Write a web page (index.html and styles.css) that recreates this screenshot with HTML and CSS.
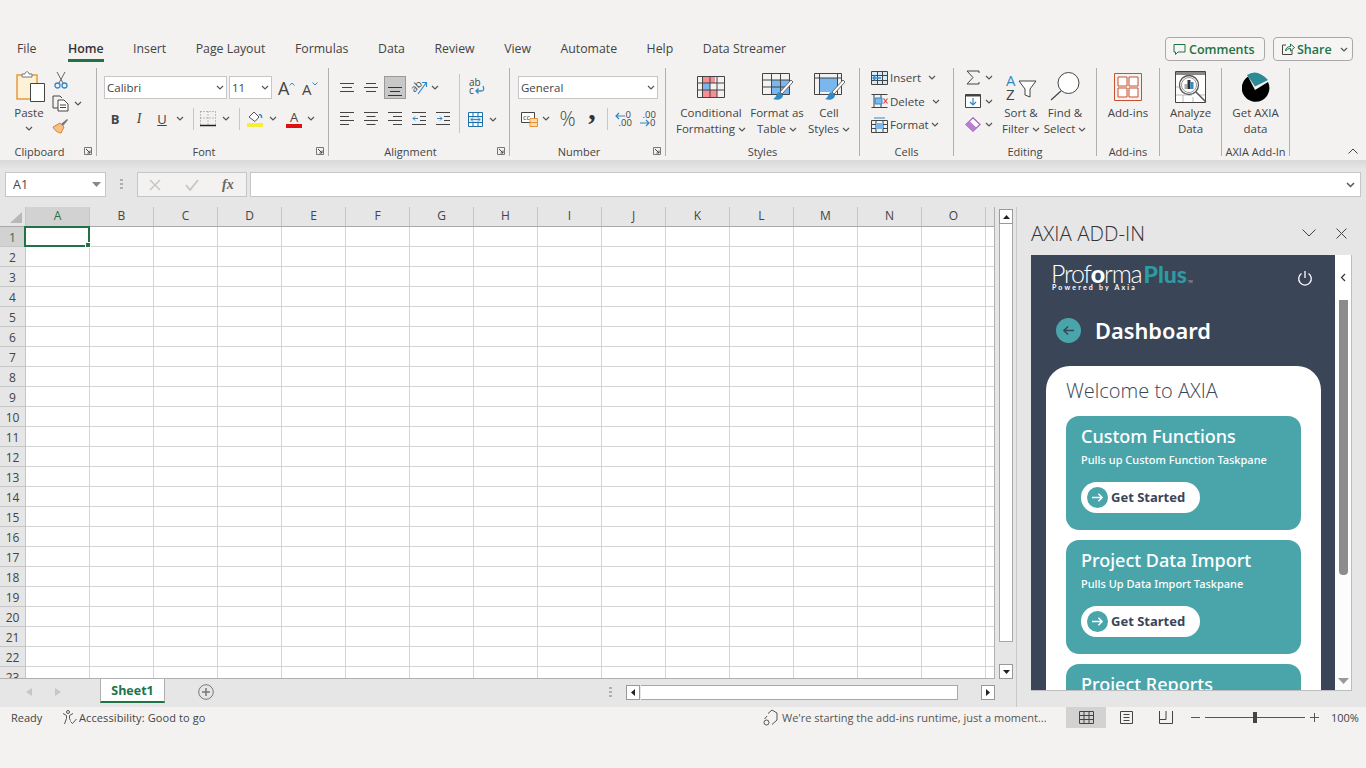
FILE: index.html
```html
<!DOCTYPE html>
<html>

<head>
	<title>Book1 - Excel</title>
	<meta charset="UTF-8">
	<link rel="stylesheet" href="styles.css">
</head>

<body>
	<svg class="sprite" width="0" height="0">
		<symbol id="chev" viewBox="0 0 8 5">
			<path d="M1 1l3 3 3-3" fill="none" stroke="#555" stroke-width="1.2" />
		</symbol>
		<symbol id="launch" viewBox="0 0 8 8">
			<path d="M.5.5h7v7h-7z" fill="none" stroke="#777" />
			<path d="M2 2l4 4M3.5 6H6V3.5" fill="none" stroke="#444" />
		</symbol>
		<symbol id="go" viewBox="0 0 14 12">
			<path d="M1 6h11M8 2l4 4-4 4" fill="none" stroke="#fff" stroke-width="1.6" />
		</symbol>
	</svg>

	<div class="topgap"></div>

	<div class="tabs">
		<nav class="tablist">
			<span class="tab first">File</span>
			<span class="tab active">Home</span>
			<span class="tab">Insert</span>
			<span class="tab">Page Layout</span>
			<span class="tab">Formulas</span>
			<span class="tab">Data</span>
			<span class="tab">Review</span>
			<span class="tab">View</span>
			<span class="tab">Automate</span>
			<span class="tab">Help</span>
			<span class="tab">Data Streamer</span>
		</nav>
		<div class="share-btns">
			<div class="pill comments">
				<svg width="13" height="13" viewBox="0 0 13 13">
					<path d="M1 1.500h11v7.500H5L2.500 11.500V9H1z" fill="none" stroke="#217346" />
				</svg>
				Comments
			</div>
			<div class="pill share">
				<svg width="14" height="14" viewBox="0 0 14 14">
					<path d="M5 3H1.500v9.500h9.500V8" fill="none" stroke="#444" />
					<path d="M4.500 9c0-3 2.500-4.500 5-4.500V2l4 3.500-4 3.500V6.500c-2 0-4 1-5 2.500z" fill="none" stroke="#217346" />
				</svg>
				Share
				<svg class="share-chev" width="8" height="5"><use href="#chev" /></svg>
			</div>
		</div>
	</div>

	<div class="ribbon">
		<!-- clipboard -->
		<section class="group g-clip">
			<div class="body">
				<div class="big paste">
					<div class="big-icon">
						<svg class="paste-icon" width="30" height="31" viewBox="0 0 30 31">
							<path d="M2 4h20v24H2z" fill="#fdf1d8" stroke="#e59a3c" stroke-width="1.500" />
							<path d="M7 6V3h3c0-3 4-3 4 0h3v3z" fill="#fff" stroke="#777" />
							<path d="M15.500 12.500h14v18h-14z" fill="#fff" stroke="#444" />
						</svg>
					</div>
					<span>Paste</span>
					<svg class="chev-line" width="8" height="5"><use href="#chev" /></svg>
				</div>
				<div class="clip-tools">
					<svg class="cut" width="14" height="18" viewBox="0 0 14 18">
						<path d="M3 1l6 11M11 1L5 12" fill="none" stroke="#666" />
						<circle cx="3.500" cy="14.500" r="2.500" fill="none" stroke="#2f8ac9" stroke-width="1.300" />
						<circle cx="10.500" cy="14.500" r="2.500" fill="none" stroke="#2f8ac9" stroke-width="1.300" />
					</svg>
					<div class="tool-row">
						<svg width="17" height="17" viewBox="0 0 17 17">
							<path d="M6 13H1V1h7l2 2" fill="none" stroke="#444" />
							<path d="M6 5h6l4 4v7H6z" fill="#fff" stroke="#444" />
							<path d="M8 10h6M8 12.500h6" stroke="#444" />
						</svg>
						<svg class="copy-chev" width="8" height="5"><use href="#chev" /></svg>
					</div>
					<svg class="brush" width="17" height="17" viewBox="0 0 17 17">
						<path d="M9 6l2 2 5-6-1-1z" fill="#777" />
						<path d="M8 5l4 4-3 6c-3 0-7-3-8-6z" fill="#f3c08a" stroke="#e0822c" />
					</svg>
				</div>
			</div>
			<div class="label-row"><span class="label">Clipboard</span><svg class="launch" width="8" height="8"><use href="#launch" /></svg></div>
		</section>

		<!-- font -->
		<section class="group g-font">
			<div class="body stack">
				<div class="font-row1">
					<div class="combo font-name">Calibri<svg width="8" height="5"><use href="#chev" /></svg></div>
					<div class="combo font-size">11<svg width="8" height="5"><use href="#chev" /></svg></div>
					<div class="grow"><span class="a-big">A</span><svg width="6" height="4" viewBox="0 0 6 4"><path d="M.5 3.500L3 1l2.500 2.500" fill="none" stroke="#2f8ac9" /></svg></div>
					<div class="grow shrink"><span class="a-small">A</span><svg width="6" height="4" viewBox="0 0 6 4"><path d="M.5.500L3 3 5.500.500" fill="none" stroke="#2f8ac9" /></svg></div>
				</div>
				<div class="font-row2">
					<b class="glyph">B</b>
					<i class="glyph serif">I</i>
					<u class="glyph">U</u>
					<svg width="8" height="5"><use href="#chev" /></svg>
					<span class="sep"></span>
					<svg width="16" height="16" viewBox="0 0 16 16">
						<path d="M.5.500h15M.5.500v13M15.500.500v13M8 .500v13M.5 7h15" fill="none" stroke="#888" stroke-dasharray="1 2" />
						<path d="M0 14.500h16" stroke="#222" stroke-width="1.500" />
					</svg>
					<svg width="8" height="5"><use href="#chev" /></svg>
					<span class="sep"></span>
					<svg width="16" height="17" viewBox="0 0 16 17">
						<path d="M2 7l5-5 5 5-4 4.500z" fill="#fff" stroke="#555" />
						<path d="M12 5c2-1 3 1 2.500 3" fill="none" stroke="#2f8ac9" stroke-width="1.500" />
						<path d="M0 13h16v4H0z" fill="#f7ee3a" />
					</svg>
					<svg width="8" height="5"><use href="#chev" /></svg>
					<div class="color-a"><span>A</span></div>
					<svg width="8" height="5"><use href="#chev" /></svg>
				</div>
			</div>
			<div class="label-row"><span class="label">Font</span><svg class="launch" width="8" height="8"><use href="#launch" /></svg></div>
		</section>

		<!-- alignment -->
		<section class="group g-align">
			<div class="body">
				<div class="align-left stack">
					<div class="align-row1">
						<svg width="14" height="10" viewBox="0 0 14 10"><path d="M0 .500h14M2 4.500h10M0 8.500h14" stroke="#444" /></svg>
						<svg width="14" height="10" viewBox="0 0 14 10"><path d="M2 .500h10M0 4.500h14M2 8.500h10" stroke="#444" /></svg>
						<div class="selected-btn"><svg width="14" height="10" viewBox="0 0 14 10"><path d="M0 1.500h14M2 5.500h10M0 9.500h14" stroke="#333" /></svg></div>
						<svg class="open-svg" width="17" height="15" viewBox="0 0 17 15">
							<text x="0" y="10" class="svg-small" transform="rotate(-45 5 7)">ab</text>
							<path d="M7 14L15 3M11 2.500h4.500V7" fill="none" stroke="#2f8ac9" stroke-width="1.200" />
						</svg>
						<svg width="8" height="5"><use href="#chev" /></svg>
					</div>
					<div class="align-row2">
						<svg width="14" height="13" viewBox="0 0 14 13"><path d="M0 .500h14M0 4.500h9M0 8.500h14M0 12.500h9" stroke="#444" /></svg>
						<svg width="14" height="13" viewBox="0 0 14 13"><path d="M0 .500h14M2.500 4.500h9M0 8.500h14M2.500 12.500h9" stroke="#444" /></svg>
						<svg width="14" height="13" viewBox="0 0 14 13"><path d="M0 .500h14M5 4.500h9M0 8.500h14M5 12.500h9" stroke="#444" /></svg>
						<svg width="14" height="13" viewBox="0 0 14 13"><path d="M0 .500h14M8 4.500h6M8 8.500h6M0 12.500h14" stroke="#444" /><path d="M6 6.500H1M3 4.500l-2 2 2 2" fill="none" stroke="#2f8ac9" /></svg>
						<svg width="14" height="13" viewBox="0 0 14 13"><path d="M0 .500h14M8 4.500h6M8 8.500h6M0 12.500h14" stroke="#444" /><path d="M1 6.500h5M4 4.500l2 2-2 2" fill="none" stroke="#2f8ac9" /></svg>
					</div>
				</div>
				<span class="sep tall"></span>
				<div class="align-right stack">
					<svg class="wrap-icon open-svg" width="16" height="16" viewBox="0 0 16 16">
						<text x="0" y="7" class="svg-small">ab</text>
						<text x="0" y="15" class="svg-small">c</text>
						<path d="M14 7c2 4 0 5-2 5H7M9.500 9.500L7 12l2.500 2.500" fill="none" stroke="#2f8ac9" stroke-width="1.300" />
					</svg>
					<div class="tool-row merge-row">
						<svg width="15" height="15" viewBox="0 0 15 15">
							<path d="M.5.500h14v14H.500z" fill="#fff" stroke="#1f6fa8" />
							<path d="M1 5h13v5H1z" fill="#dcebf7" />
							<path d="M.5 4.500h14M.5 10.500h14M5 .500v4M10 .500v4M5 10.500v4M10 10.500v4" fill="none" stroke="#1f6fa8" />
							<path d="M3 7.500h9M5 5.500l-2 2 2 2M10 5.500l2 2-2 2" fill="none" stroke="#2f8ac9" />
						</svg>
						<svg width="8" height="5"><use href="#chev" /></svg>
					</div>
				</div>
			</div>
			<div class="label-row"><span class="label">Alignment</span><svg class="launch" width="8" height="8"><use href="#launch" /></svg></div>
		</section>

		<!-- number -->
		<section class="group g-number">
			<div class="body stack">
				<div class="combo number-format">General<svg width="8" height="5"><use href="#chev" /></svg></div>
				<div class="number-row">
					<svg width="17" height="16" viewBox="0 0 17 16">
						<path d="M.5 1.500h13v10H.5z" fill="#fff" stroke="#444" />
						<text x="2" y="9" class="svg-tiny">cc</text>
						<path d="M9 7.500h7.500v8H9z" fill="#fbdcae" stroke="#e8923a" />
						<path d="M9 11.500h7.500" stroke="#e8923a" />
					</svg>
					<svg width="8" height="5"><use href="#chev" /></svg>
					<span class="percent">%</span>
					<b class="comma">,</b>
					<span class="sep"></span>
					<svg class="open-svg" width="17" height="16" viewBox="0 0 17 16">
						<path d="M10 5H1M4 2L1 5l3 3" fill="none" stroke="#2f8ac9" stroke-width="1.200" />
						<text x="10.500" y="7" class="svg-dec">0</text>
						<text x="3.500" y="15" class="svg-dec">.00</text>
					</svg>
					<svg class="open-svg" width="17" height="16" viewBox="0 0 17 16">
						<text x="3.500" y="7" class="svg-dec">.00</text>
						<path d="M1 12h9M7 9l3 3-3 3" fill="none" stroke="#2f8ac9" stroke-width="1.200" />
						<text x="11" y="15" class="svg-dec">0</text>
					</svg>
				</div>
			</div>
			<div class="label-row"><span class="label">Number</span><svg class="launch" width="8" height="8"><use href="#launch" /></svg></div>
		</section>

		<!-- styles -->
		<section class="group g-styles">
			<div class="body">
				<div class="big w-cond">
					<div class="big-icon">
						<svg width="28" height="22" viewBox="0 0 28 22">
							<path d="M5 0h13v7H5zM5 14h15v8H5z" fill="#f78e96" />
							<path d="M5 7h8v7H5z" fill="#79b7ee" />
							<path d="M.5.500h27v21H.5zM.5 7h27M.5 14h27M5.500.500v21M13 .500v21M20 .500v21" fill="none" stroke="#444" />
						</svg>
					</div>
					<span>Conditional</span>
					<span class="chev-text">Formatting <svg width="8" height="5"><use href="#chev" /></svg></span>
				</div>
				<div class="big w-table">
					<div class="big-icon">
						<svg width="31" height="28" viewBox="0 0 31 28">
							<path d="M10 7h18v15H10z" fill="#79b7ee" />
							<path d="M.5.500h27v21H.5zM.5 7h27M.5 14h27M9.500.500v21M18.500.500v21" fill="none" stroke="#444" />
							<path d="M29 7L18 19l2 2L31 9z" fill="#fff" stroke="#666" />
							<path d="M17 19c-3 1-2 5-6 7 5 2 10 0 10-4z" fill="#2f8ac9" />
						</svg>
					</div>
					<span>Format as</span>
					<span class="chev-text">Table <svg width="8" height="5"><use href="#chev" /></svg></span>
				</div>
				<div class="big w-cell">
					<div class="big-icon">
						<svg width="31" height="28" viewBox="0 0 31 28">
							<path d="M5 5h19v14H5z" fill="#79b7ee" />
							<path d="M.5.500h27v21H.5zM.5 5h27M5.500.500v21M23.500.500v21" fill="none" stroke="#444" />
							<path d="M29 7L18 19l2 2L31 9z" fill="#fff" stroke="#666" />
							<path d="M17 19c-3 1-2 5-6 7 5 2 10 0 10-4z" fill="#2f8ac9" />
						</svg>
					</div>
					<span>Cell</span>
					<span class="chev-text">Styles <svg width="8" height="5"><use href="#chev" /></svg></span>
				</div>
			</div>
			<div class="label-row plain"><span class="label">Styles</span></div>
		</section>

		<!-- cells -->
		<section class="group g-cells">
			<div class="body stack rows3">
				<div class="row3">
					<svg width="17" height="14" viewBox="0 0 17 14">
						<path d="M.5.500h16v13H.5zM.5 4.500h16M.5 9.500h16M6.500.500v13M11.500.500v13" fill="#d7e9f8" stroke="#444" />
						<path d="M10 7H2M4.500 4.500L2 7l2.500 2.500" fill="none" stroke="#2f8ac9" stroke-width="1.300" />
					</svg>
					<span>Insert</span><svg class="gap-chev" width="8" height="5"><use href="#chev" /></svg>
				</div>
				<div class="row3">
					<svg width="17" height="14" viewBox="0 0 17 14">
						<path d="M.5.500h16M.5 13.500h16M3 .500v13M10 .500v13" fill="none" stroke="#444" />
						<path d="M4 4h7v6H4z" fill="#79b7ee" stroke="#2f8ac9" />
						<path d="M12.500 4.500l4 5M16.500 4.500l-4 5" stroke="#e23b3b" stroke-width="1.200" />
					</svg>
					<span>Delete</span><svg class="gap-chev" width="8" height="5"><use href="#chev" /></svg>
				</div>
				<div class="row3">
					<svg width="17" height="16" viewBox="0 0 17 16">
						<path d="M.5 3.500h16v12H.5zM.5 7.500h16M.5 11.500h16M5 3.500v12M12 3.500v12" fill="none" stroke="#444" />
						<path d="M5 6h7v6H5z" fill="#79b7ee" />
						<path d="M3 1h11" stroke="#2f8ac9" />
					</svg>
					<span>Format</span><svg class="gap-chev near" width="8" height="5"><use href="#chev" /></svg>
				</div>
			</div>
			<div class="label-row plain"><span class="label">Cells</span></div>
		</section>

		<!-- editing -->
		<section class="group g-edit">
			<div class="body">
				<div class="stack rows3 edit-col">
					<div class="row3">
						<svg width="16" height="15" viewBox="0 0 16 15">
							<path d="M14 3V1H2l6 6.500L2 14h12v-2" fill="none" stroke="#444" />
						</svg>
						<svg width="8" height="5"><use href="#chev" /></svg>
					</div>
					<div class="row3">
						<svg width="16" height="14" viewBox="0 0 16 14">
							<path d="M.5.500h15v13H.5z" fill="#fff" stroke="#444" />
							<path d="M.5.500h15v2H.5z" fill="#444" />
							<path d="M8 4v7M5 8l3 3 3-3" fill="none" stroke="#2f8ac9" stroke-width="1.200" />
						</svg>
						<svg width="8" height="5"><use href="#chev" /></svg>
					</div>
					<div class="row3">
						<svg width="16" height="15" viewBox="0 0 16 15">
							<path d="M8 .800L15 7.500 8 14.200 1 7.500z" fill="#fff" stroke="#a65fc4" stroke-width="1.200" />
							<path d="M4.500 4L1 7.500 8 14.200 11.500 10.800z" fill="#b77fd0" />
						</svg>
						<svg width="8" height="5"><use href="#chev" /></svg>
					</div>
				</div>
				<div class="big w-sort">
					<div class="big-icon">
						<svg class="open-svg" width="32" height="28" viewBox="0 0 32 28">
							<text x="1" y="13" class="svg-az blue">A</text>
							<text x="1" y="27" class="svg-az">Z</text>
							<path d="M14 8h17l-6 8v8l-5-2v-6z" fill="#fff" stroke="#444" />
						</svg>
					</div>
					<span>Sort &amp;</span>
					<span class="chev-text">Filter <svg width="8" height="5"><use href="#chev" /></svg></span>
				</div>
				<div class="big w-find">
					<div class="big-icon">
						<svg width="30" height="29" viewBox="0 0 30 29">
							<circle cx="18.500" cy="11" r="10.500" fill="#fff" stroke="#444" />
							<path d="M11 19L1 28" stroke="#444" stroke-width="1.200" />
						</svg>
					</div>
					<span>Find &amp;</span>
					<span class="chev-text">Select <svg width="8" height="5"><use href="#chev" /></svg></span>
				</div>
			</div>
			<div class="label-row plain"><span class="label">Editing</span></div>
		</section>

		<!-- add-ins -->
		<section class="group g-addins">
			<div class="body">
				<div class="big wide">
					<div class="big-icon">
						<svg width="28" height="28" viewBox="0 0 28 28">
							<path d="M.5.500h27v27H.500z" fill="none" stroke="#c8512c" />
							<path d="M4 4h9v9H4zM15 4h9v9h-9zM4 15h9v9H4zM15 15h9v9h-9z" fill="#fff" stroke="#c8512c" />
						</svg>
					</div>
					<span>Add-ins</span>
				</div>
			</div>
			<div class="label-row plain"><span class="label">Add-ins</span></div>
		</section>

		<section class="group g-analyze">
			<div class="body">
				<div class="big wide">
					<div class="big-icon">
						<svg width="32" height="32" viewBox="0 0 32 32">
							<path d="M.5.500h30v31H.5z" fill="#fff" stroke="#444" />
							<path d="M1 1h29v3H1z" fill="#888" />
							<path d="M1 16h9M1 24h16M8 24v7M18 26v5M24 24h6" stroke="#bbb" />
							<circle cx="14" cy="14" r="9.500" fill="#fff" stroke="#555" stroke-width="1.300" />
							<circle cx="14" cy="14" r="7.500" fill="none" stroke="#999" />
							<path d="M9.500 13h3v5h-3z" fill="#aaa" />
							<path d="M12.500 9h3v9h-3z" fill="#333" />
							<path d="M15.500 11h3v7h-3z" fill="#2f8ac9" />
							<path d="M21 21l10 10" stroke="#555" stroke-width="1.500" />
						</svg>
					</div>
					<span>Analyze</span>
					<span>Data</span>
				</div>
			</div>
		</section>

		<section class="group g-axia">
			<div class="body">
				<div class="big wide">
					<div class="big-icon">
						<svg width="28" height="31" viewBox="0 0 28 31">
							<path d="M13 15.500L5 4Q15-3 26 9z" fill="#2b8a94" />
							<path d="M6 5.500L13 19l13-8A13.800 13.800 0 1 1 6 5.500z" fill="#000" />
						</svg>
					</div>
					<span>Get AXIA</span>
					<span>data</span>
				</div>
			</div>
			<div class="label-row plain"><span class="label">AXIA Add-In</span></div>
		</section>

		<div class="collapse">
			<svg width="10" height="6" viewBox="0 0 10 6"><path d="M.5 5.500L5 1l4.500 4.500" fill="none" stroke="#444" /></svg>
		</div>
	</div>

	<div class="formula-area">
		<div class="name-box">A1<svg width="9" height="5" viewBox="0 0 9 5"><path d="M0 0h9L4.500 5z" fill="#888" /></svg></div>
		<div class="dots"></div>
		<div class="fx-buttons">
			<svg width="12" height="12" viewBox="0 0 12 12"><path d="M1 1l10 10M11 1L1 11" stroke="#c6c6c6" stroke-width="1.500" /></svg>
			<svg width="14" height="12" viewBox="0 0 14 12"><path d="M1 6l4 5 8-10" fill="none" stroke="#c6c6c6" stroke-width="1.800" /></svg>
			<i class="fx">fx</i>
		</div>
		<div class="formula-input"><svg width="9" height="6" viewBox="0 0 9 6"><path d="M1 1l3.500 3.500L8 1" fill="none" stroke="#555" stroke-width="1.500" /></svg></div>
	</div>

	<main class="main">
		<div class="workbook">
			<div class="sheet-wrap">
				<div class="sheet">
					<div class="col-heads">
						<div class="corner"><span class="corner-tri"></span></div>
						<div class="col sel">A</div>
						<div class="col">B</div>
						<div class="col">C</div>
						<div class="col">D</div>
						<div class="col">E</div>
						<div class="col">F</div>
						<div class="col">G</div>
						<div class="col">H</div>
						<div class="col">I</div>
						<div class="col">J</div>
						<div class="col">K</div>
						<div class="col">L</div>
						<div class="col">M</div>
						<div class="col">N</div>
						<div class="col">O</div>
						<div class="col"></div>
					</div>
					<div class="rows">
						<div class="rownum sel">1</div>
						<div class="rownum">2</div>
						<div class="rownum">3</div>
						<div class="rownum">4</div>
						<div class="rownum">5</div>
						<div class="rownum">6</div>
						<div class="rownum">7</div>
						<div class="rownum">8</div>
						<div class="rownum">9</div>
						<div class="rownum">10</div>
						<div class="rownum">11</div>
						<div class="rownum">12</div>
						<div class="rownum">13</div>
						<div class="rownum">14</div>
						<div class="rownum">15</div>
						<div class="rownum">16</div>
						<div class="rownum">17</div>
						<div class="rownum">18</div>
						<div class="rownum">19</div>
						<div class="rownum">20</div>
						<div class="rownum">21</div>
						<div class="rownum">22</div>
						<div class="rownum">23</div>
						<div class="active-cell"><span class="fill-handle"></span></div>
					</div>
				</div>
				<div class="vscroll">
					<div class="sbtn"><svg width="7" height="4" viewBox="0 0 7 4"><path d="M0 4h7L3.500 0z" fill="#222" /></svg></div>
					<div class="vthumb"></div>
					<div class="sbtn"><svg width="7" height="4" viewBox="0 0 7 4"><path d="M0 0h7L3.500 4z" fill="#222" /></svg></div>
				</div>
			</div>
			<div class="sheet-tabs">
				<div class="tab-nav">
					<svg width="6" height="8" viewBox="0 0 6 8"><path d="M6 0v8L0 4z" fill="#c6c6c6" /></svg>
					<svg width="6" height="8" viewBox="0 0 6 8"><path d="M0 0v8l6-4z" fill="#c6c6c6" /></svg>
				</div>
				<div class="sheet-tab">Sheet1</div>
				<svg class="add-sheet" width="16" height="16" viewBox="0 0 16 16">
					<circle cx="8" cy="8" r="7.300" fill="none" stroke="#777" />
					<path d="M8 4v8M4 8h8" stroke="#777" stroke-width="1.500" />
				</svg>
				<div class="dots tab-dots"></div>
				<div class="hscroll">
					<div class="sbtn"><svg width="4" height="7" viewBox="0 0 4 7"><path d="M4 0v7L0 3.500z" fill="#222" /></svg></div>
					<div class="hthumb"></div>
					<div class="sbtn"><svg width="4" height="7" viewBox="0 0 4 7"><path d="M0 0v7l4-3.500z" fill="#222" /></svg></div>
				</div>
			</div>
		</div>

		<aside class="pane">
			<div class="pane-head">
				<span class="pane-title">AXIA ADD-IN</span>
				<svg class="pane-down" width="14" height="8" viewBox="0 0 14 8"><path d="M.5.500L7 7 13.500.500" fill="none" stroke="#444" /></svg>
				<svg class="pane-x" width="11" height="11" viewBox="0 0 11 11"><path d="M.5.500l10 10M10.500.500l-10 10" stroke="#444" /></svg>
			</div>
			<div class="frame">
				<div class="app">
					<header class="app-head">
						<div class="logo">
							<div class="logo-main"><span class="logo-a">Prof<b class="logo-o">o</b>rma</span><span class="logo-b">Plus</span><span class="logo-tm">TM</span></div>
							<div class="logo-sub">Powered by Axia</div>
						</div>
						<svg class="power" width="16" height="16" viewBox="0 0 16 16">
							<path d="M8 1v7M4.500 3.500a6.300 6.300 0 1 0 7 0" fill="none" stroke="#fff" stroke-width="1.300" />
						</svg>
					</header>
					<div class="page-title">
						<div class="back"><svg width="13" height="11" viewBox="0 0 13 11"><path d="M12 5.500H2M6 1.500l-4 4 4 4" fill="none" stroke="#3a4558" stroke-width="1.600" /></svg></div>
						<h1>Dashboard</h1>
					</div>
					<div class="panel">
						<h2>Welcome to AXIA</h2>
						<div class="card">
							<h3>Custom Functions</h3>
							<p>Pulls up Custom Function Taskpane</p>
							<div class="start"><span class="start-dot"><svg width="13" height="11"><use href="#go" /></svg></span>Get Started</div>
						</div>
						<div class="card">
							<h3>Project Data Import</h3>
							<p>Pulls Up Data Import Taskpane</p>
							<div class="start"><span class="start-dot"><svg width="13" height="11"><use href="#go" /></svg></span>Get Started</div>
						</div>
						<div class="card">
							<h3>Project Reports</h3>
						</div>
					</div>
				</div>
				<div class="app-side">
					<div class="side-toggle"><svg width="6" height="9" viewBox="0 0 6 9"><path d="M5 1L1.500 4.500 5 8" fill="none" stroke="#333" stroke-width="1.200" /></svg></div>
					<div class="side-thumb"></div>
					<svg class="side-down" width="11" height="6" viewBox="0 0 11 6"><path d="M0 0h11L5.500 6z" fill="#999" /></svg>
				</div>
			</div>
		</aside>
	</main>

	<footer class="status">
		<span class="ready">Ready</span>
		<svg class="a11y" width="15" height="15" viewBox="0 0 15 15">
			<circle cx="6" cy="2" r="1.500" fill="none" stroke="#555" />
			<path d="M1 3.500l3.500 2v3L2.500 14M11 3.500l-3.500 2v3l1 2" fill="none" stroke="#555" />
			<path d="M8.500 11.500l2 2 4-4.500" fill="none" stroke="#555" />
		</svg>
		<span class="a11y-text">Accessibility: Good to go</span>
		<svg class="runtime-icon" width="16" height="17" viewBox="0 0 16 17">
			<path d="M5 4.500L9 1l5 3v7l-5 4.500" fill="none" stroke="#555" />
			<path d="M4 7L1.500 10" fill="none" stroke="#555" />
			<circle cx="3.500" cy="13.500" r="2.500" fill="none" stroke="#555" />
		</svg>
		<span class="runtime">We're starting the add-ins runtime, just a moment...</span>
		<div class="view-btn on">
			<svg width="15" height="13" viewBox="0 0 15 13"><path d="M.5.500h14v12H.5zM.5 4.500h14M.5 8.500h14M5 .500v12M10 .500v12" fill="none" stroke="#444" /></svg>
		</div>
		<div class="view-btn">
			<svg width="13" height="13" viewBox="0 0 13 13"><path d="M.5.500h12v12H.5zM3.500 3.500h6M3.500 6.500h6M3.500 9.500h6" fill="none" stroke="#444" /></svg>
		</div>
		<div class="view-btn">
			<svg width="14" height="13" viewBox="0 0 14 13"><path d="M.5 0v12.500h13V0M.5 8.500h6.500V0" fill="none" stroke="#444" /></svg>
		</div>
		<div class="zoom">
			<span class="zoom-minus"></span>
			<div class="zoom-track"><span class="zoom-thumb"></span></div>
			<svg width="9" height="9" viewBox="0 0 9 9"><path d="M4.500 0v9M0 4.500h9" stroke="#555" /></svg>
		</div>
		<span class="zoom-val">100%</span>
	</footer>
</body>

</html>
```

FILE: styles.css
```css
* {
	box-sizing: border-box;
}

html,
body {
	margin: 0;
	height: 768px;
	overflow: hidden;
}

body {
	display: flex;
	flex-direction: column;
	background: #f3f2f1;
	font-family: "Open Sans", "Noto Sans", sans-serif;
	font-size: 11px;
	color: #444;
}

svg {
	display: block;
	flex: none;
}

.open-svg {
	overflow: visible;
}

.sprite {
	position: absolute;
}

.topgap {
	height: 36px;
	flex: none;
}

/* tabs */
.tabs {
	height: 26px;
	flex: none;
	display: flex;
	justify-content: space-between;
	padding: 0 13px 0 17px;
}

.tablist {
	display: flex;
	gap: 29.5px;
	font-size: 12.3px;
	line-height: 26px;
}

.tab {
	height: 26px;
}

.tab.first {
	margin-right: 2px;
}

.tab.active {
	color: #333;
	font-weight: 600;
	border-bottom: 3px solid #217346;
}

.share-btns {
	display: flex;
	gap: 8px;
	margin-top: 1px;
}

.pill {
	height: 24px;
	display: flex;
	align-items: center;
	border: 1px solid #a8a8a8;
	border-radius: 4px;
	color: #217346;
	font-size: 12.5px;
	font-weight: 600;
	background: #f6f5f4;
}

.comments {
	width: 100px;
	padding-left: 7px;
	gap: 3px;
}

.share {
	width: 80px;
	padding-left: 7px;
	gap: 2px;
}

.share-chev {
	margin-left: 6px;
}

/* ribbon */
.ribbon {
	height: 98px;
	flex: none;
	display: flex;
	padding-top: 6px;
	font-size: 11.5px;
}

.group {
	height: 88px;
	display: flex;
	flex-direction: column;
	justify-content: space-between;
	border-right: 1px solid #b0b0b0;
}

.g-clip { width: 97px; }
.g-font { width: 232px; padding-left: 7px; }
.g-align { width: 181px; padding-left: 6px; }
.g-number { width: 156px; padding-left: 8px; }
.g-styles { width: 194px; padding-left: 8px; }
.g-cells { width: 94px; padding-left: 11px; }
.g-edit { width: 143px; padding-left: 11px; }
.g-addins { width: 63px; }
.g-analyze { width: 62px; }
.g-axia { width: 68px; }

.g-clip .label-row,
.g-font .label-row,
.g-align .label-row,
.g-number .label-row {
	padding-right: 4px;
}

.g-font .label-row { margin-left: -7px; }
.g-align .label-row { margin-left: -6px; }
.g-number .label-row { margin-left: -8px; }
.g-styles .label-row { margin-left: -8px; }
.g-cells .label-row { margin-left: -11px; }
.g-edit .label-row { margin-left: -11px; }

.body {
	display: flex;
}

.stack {
	display: flex;
	flex-direction: column;
}

.label-row {
	display: flex;
	align-items: center;
	height: 14px;
	margin-bottom: -2px;
	font-size: 11px;
}

.label {
	flex: 1;
	text-align: center;
	white-space: nowrap;
	margin-right: 5px;
}

.label-row.plain .label {
	margin-right: 0;
}

.big {
	display: flex;
	flex-direction: column;
	align-items: center;
	line-height: 16px;
	white-space: nowrap;
}

.big-icon {
	height: 37px;
	display: flex;
	align-items: center;
	justify-content: center;
}

.chev-text svg {
	display: inline-block;
	vertical-align: 1px;
}

.chev-line {
	margin-top: 5px;
}

.wide {
	width: 100%;
}

.group > .body {
	flex: none;
}

.g-addins .body,
.g-analyze .body,
.g-axia .body {
	width: 100%;
}

/* clipboard */
.paste {
	width: 30px;
	margin-left: 14px;
}

.paste-icon {
	margin-left: 2px;
}

.clip-tools {
	margin-left: 8px;
	padding-top: 3px;
	display: flex;
	flex-direction: column;
}

.cut {
	margin-left: 2px;
}

.tool-row {
	display: flex;
	align-items: center;
}

.clip-tools .tool-row {
	margin-top: 6px;
}

.copy-chev {
	margin-left: 5px;
}

.brush {
	margin-top: 6px;
}

/* font */
.font-row1 {
	display: flex;
	margin-top: 8px;
	gap: 2px;
	align-items: center;
}

.combo {
	height: 23px;
	display: flex;
	align-items: center;
	justify-content: space-between;
	padding: 0 2px;
	background: #fff;
	border: 1px solid #c6c6c6;
	font-size: 11.5px;
	color: #444;
}

.font-name { width: 123px; }
.font-size { width: 43px; }

.grow {
	display: flex;
	align-items: flex-start;
	height: 20px;
	width: 21px;
	margin-left: 4px;
}

.shrink {
	margin-left: 1px;
}

.a-big {
	font-size: 18px;
	line-height: 20px;
}

.a-small {
	font-size: 15px;
	line-height: 22px;
}

.grow svg {
	margin-top: 4px;
}

.font-row2 {
	display: grid;
	grid-template-columns: 22px 26px 20px 16px 10px 20px 16px 11px 20px 16px 26px 8px;
	justify-items: center;
	align-items: center;
	height: 23px;
	margin-top: 8px;
}

.glyph {
	font-size: 13px;
	color: #444;
}

.serif {
	font-family: "Liberation Serif", serif;
	font-size: 14px;
}

.sep {
	display: block;
	width: 1px;
	height: 22px;
	background: #c6c6c6;
}

.color-a {
	width: 16px;
	height: 18px;
	text-align: center;
	border-bottom: 4px solid #e01010;
	font-size: 13px;
	line-height: 14px;
}

/* alignment */
.align-row1,
.align-row2 {
	display: grid;
	justify-items: center;
	align-items: center;
	height: 23px;
	margin-top: 8px;
}

.align-row1 {
	grid-template-columns: 24px 24px 24px 24px 8px;
}

.align-row2 {
	grid-template-columns: 24px 24px 24px 24px 24px;
}

.selected-btn {
	width: 22px;
	height: 23px;
	display: flex;
	align-items: center;
	justify-content: center;
	padding-top: 6px;
	background: #c8c8c8;
	border: 1px solid #9a9a9a;
}

.sep.tall {
	height: 59px;
	margin: 6px 8px 0 4px;
}

.wrap-icon {
	margin: 11px 0 0 1px;
}

.merge-row {
	margin-top: 17px;
	gap: 6px;
}

.svg-small {
	font-size: 10px;
	fill: #444;
}

.svg-tiny {
	font-size: 7.5px;
	fill: #444;
}

.svg-dec {
	font-size: 9.5px;
	fill: #444;
}

.svg-az {
	font-size: 15px;
	fill: #444;
}

.svg-az.blue {
	fill: #2f8ac9;
}

/* number */
.number-format {
	width: 140px;
	margin-top: 8px;
}

.number-row {
	display: grid;
	grid-template-columns: 22px 12px 31px 18px 12px 20px 28px;
	justify-items: center;
	align-items: center;
	height: 23px;
	margin-top: 8px;
}

.percent {
	font-size: 20px;
	line-height: 20px;
	font-weight: 300;
}

.comma {
	font-family: "Liberation Serif", serif;
	font-size: 30px;
	line-height: 14px;
	margin-top: -20px;
	color: #333;
}

/* styles */
.w-cond { width: 74px; }
.w-table { width: 58px; }
.w-cell { width: 46px; }
.w-sort { width: 48px; }
.w-find { width: 40px; }

/* cells and editing */
.rows3 {
	margin-top: -2px;
}

.row3 {
	display: flex;
	align-items: center;
	height: 23.5px;
	gap: 2px;
}

.gap-chev {
	margin-left: 5px;
}

.gap-chev.near {
	margin-left: 0;
}

.edit-col {
	width: 32px;
}

.edit-col .row3 {
	gap: 4px;
}

.collapse {
	margin: 80px 0 0 58px;
}

/* formula bar */
.formula-area {
	height: 47px;
	flex: none;
	display: flex;
	padding: 12px 5px 10px;
	background: linear-gradient(#d9d9d9, #e6e6e6 9px);
}

.name-box,
.fx-buttons,
.formula-input {
	height: 25px;
	background: #fff;
	border: 1px solid #c6c6c6;
	display: flex;
	align-items: center;
}

.name-box {
	width: 101px;
	padding: 0 4px 0 7px;
	justify-content: space-between;
	font-size: 12.5px;
}

.dots {
	width: 3px;
	height: 10px;
	margin: 7px 14px 0 14px;
	background: repeating-linear-gradient(#b0b0b0 0 2px, transparent 2px 4px);
}

.fx-buttons {
	width: 110px;
	background: #f3f2f1;
	padding-left: 11px;
	gap: 24px;
}

.fx {
	font-family: "Liberation Serif", serif;
	font-size: 14px;
	font-weight: bold;
	color: #666;
	margin-left: -1px;
}

.formula-input {
	flex: 1;
	margin-left: 3px;
	justify-content: flex-end;
	padding-right: 5px;
}

/* worksheet */
.main {
	height: 500px;
	flex: none;
	display: flex;
	background: #e6e6e6;
}

.workbook {
	width: 1017px;
	flex: none;
	display: flex;
	flex-direction: column;
	border-right: 1px solid #c8c8c8;
}

.sheet-wrap {
	height: 472px;
	flex: none;
	display: flex;
}

.sheet {
	width: 995px;
	flex: none;
	overflow: hidden;
	border-right: 1px solid #b0b0b0;
	border-bottom: 1px solid #b0b0b0;
}

.col-heads {
	display: flex;
	height: 20px;
	border-bottom: 1px solid #a8a8a8;
	font-size: 12px;
}

.corner {
	width: 26px;
	flex: none;
	border-right: 1px solid #c6c6c6;
	position: relative;
}

.corner-tri {
	position: absolute;
	left: 10px;
	top: 5px;
	border-style: solid;
	border-width: 0 0 11px 12px;
	border-color: transparent transparent #b8b8b8 transparent;
}

.col {
	width: 64px;
	flex: none;
	text-align: center;
	line-height: 18px;
	border-right: 1px solid #c6c6c6;
}

.col.sel {
	background: #d2d2d2;
	color: #217346;
}

.rows {
	position: relative;
	height: 452px;
	background-color: #fff;
	background-image:
		linear-gradient(to right, #d4d4d4 1px, transparent 1px),
		linear-gradient(to bottom, transparent 19px, #d4d4d4 19px);
	background-size: 64px 100%, 100% 20px;
	background-position: 25px 0, 0 0;
}

.rownum {
	width: 26px;
	height: 20px;
	text-align: center;
	line-height: 21px;
	font-size: 12px;
	background: #e6e6e6;
	border-right: 1px solid #c6c6c6;
	border-bottom: 1px solid #c6c6c6;
}

.rownum.sel {
	background: #d2d2d2;
	color: #217346;
}

.active-cell {
	position: absolute;
	left: 24px;
	top: -1px;
	width: 66px;
	height: 21px;
	border: 2px solid #217346;
}

.fill-handle {
	position: absolute;
	right: -3px;
	bottom: -3px;
	box-sizing: content-box;
	width: 4px;
	height: 4px;
	background: #217346;
	border: 1px solid #fff;
}

.vscroll {
	width: 14px;
	height: 471px;
	margin: 2px 0 0 4px;
	display: flex;
	flex-direction: column;
	justify-content: flex-start;
}

.sbtn {
	width: 14px;
	height: 15px;
	flex: none;
	display: flex;
	align-items: center;
	justify-content: center;
	background: #fff;
	border: 1px solid #999;
}

.vthumb {
	height: 418px;
	flex: none;
	background: #fff;
	border: 1px solid #a8a8a8;
	border-top: 0;
	margin-bottom: 22px;
}

.sheet-tabs {
	height: 28px;
	flex: none;
	display: flex;
	align-items: flex-start;
}

.tab-nav {
	width: 100px;
	flex: none;
	display: flex;
	gap: 23px;
	padding: 9px 0 0 26px;
}

.sheet-tab {
	width: 65px;
	height: 24px;
	text-align: center;
	line-height: 24px;
	font-size: 12.5px;
	font-weight: 700;
	color: #217346;
	background: #fff;
	border: 1px solid #b0b0b0;
	border-top: 0;
	border-bottom: 2px solid #217346;
}

.add-sheet {
	margin: 5px 0 0 33px;
}

.tab-dots {
	margin: 8px 0 0 395px;
}

.hscroll {
	width: 369px;
	height: 15px;
	flex: none;
	margin: 6px 0 0 14px;
	display: flex;
	justify-content: space-between;
}

.hthumb {
	width: 317px;
	height: 15px;
	margin-right: 23px;
	background: #fff;
	border: 1px solid #a8a8a8;
	border-left: 0;
}

/* task pane */
.pane {
	flex: 1;
	display: flex;
	flex-direction: column;
	padding-left: 14px;
}

.pane-head {
	height: 48px;
	flex: none;
	display: flex;
	align-items: center;
	padding-top: 4px;
}

.pane-title {
	font-size: 20.5px;
	font-weight: 300;
	color: #333;
	width: 271px;
	white-space: nowrap;
}

.pane-x {
	margin-left: 20px;
}

.frame {
	width: 321px;
	height: 436px;
	display: flex;
	border-right: 1px solid #bdbdbd;
	border-bottom: 1px solid #bdbdbd;
	overflow: hidden;
}

.app {
	width: 304px;
	flex: none;
	background: #3a4558;
	height: 435px;
	overflow: hidden;
}

.app-head {
	height: 51px;
	display: flex;
	justify-content: space-between;
	padding: 6px 22px 0 20px;
}

.logo {
	line-height: 1;
	white-space: nowrap;
}

.logo-main {
	display: flex;
	align-items: baseline;
	font-family: "Lato", sans-serif;
	font-size: 25px;
	height: 24px;
}

.logo-a {
	font-weight: 300;
	color: #fff;
	letter-spacing: -1.2px;
}

.logo-o {
	font-weight: 900;
}

.logo-b {
	font-weight: 900;
	font-size: 23px;
	color: #2f9aa1;
	margin-left: 2px;
}

.logo-tm {
	font-size: 3px;
	color: #ccc;
	margin-left: 1px;
}

.logo-sub {
	font-family: "Lato", sans-serif;
	font-size: 7px;
	font-weight: 700;
	letter-spacing: 2.2px;
	color: #fff;
	margin: -1px 0 0 1px;
}

.power {
	margin-top: 9px;
}

.page-title {
	height: 48px;
	display: flex;
	align-items: center;
	padding-left: 25px;
}

.back {
	width: 25px;
	height: 25px;
	border-radius: 50%;
	display: flex;
	align-items: center;
	justify-content: center;
	background: #4aa5ab;
}

h1 {
	margin: 0 0 0 14px;
	font-family: "Noto Sans", sans-serif;
	font-size: 21.8px;
	font-weight: 600;
	color: #fff;
}

.panel {
	margin: 12px 14px 0 15px;
	padding: 12px 20px 0;
	height: 400px;
	background: #fff;
	border-radius: 24px 24px 0 0;
}

h2 {
	margin: 0 0 12px;
	font-family: "Open Sans", sans-serif;
	font-size: 20px;
	line-height: 26px;
	font-weight: 300;
	color: #3a4558;
}

.card {
	height: 114px;
	margin-bottom: 10px;
	padding: 8px 15px 0;
	background: #4aa5ab;
	border-radius: 13px;
	color: #fff;
	font-family: "Noto Sans", sans-serif;
}

h3 {
	margin: 0;
	font-size: 18px;
	line-height: 24px;
	font-weight: 500;
}

.card p {
	margin: 3px 0 0;
	font-size: 11px;
	line-height: 18px;
	font-weight: 500;
}

.start {
	width: 119px;
	height: 31px;
	margin-top: 13px;
	display: flex;
	align-items: center;
	gap: 3px;
	padding: 0 0 1px 6px;
	border-radius: 16px;
	background: #fff;
	color: #3a4558;
	font-size: 13px;
	font-weight: 700;
}

.start-dot {
	width: 21px;
	height: 21px;
	border-radius: 50%;
	display: flex;
	align-items: center;
	justify-content: center;
	background: #4aa5ab;
}

.app-side {
	flex: 1;
	display: flex;
	flex-direction: column;
	align-items: center;
	background: #fcfcfc;
	height: 435px;
}

.side-toggle {
	width: 100%;
	height: 45px;
	flex: none;
	display: flex;
	align-items: center;
	justify-content: center;
	background: #fff;
}

.side-thumb {
	width: 9px;
	height: 275px;
	flex: none;
	background: #8c8c8c;
	border-radius: 0 0 4px 4px;
}

.side-down {
	margin-top: 103px;
}

/* status bar */
.status {
	height: 22px;
	flex: none;
	display: flex;
	align-items: center;
	padding: 0 0 2px 11px;
	font-size: 11px;
	white-space: nowrap;
}

.ready {
	width: 51px;
}

.a11y-text {
	margin-left: 2px;
	width: 127px;
	letter-spacing: .1px;
}

.runtime-icon {
	margin-left: 557px;
}

.runtime {
	margin-left: 3px;
	width: 284px;
	color: #555;
}

.view-btn {
	width: 40px;
	height: 21px;
	margin-top: 1px;
	display: flex;
	align-items: center;
	justify-content: center;
}

.view-btn.on {
	background: #d2d2d2;
}

.zoom {
	display: flex;
	align-items: center;
	margin-left: 5px;
}

.zoom-minus {
	width: 9px;
	height: 1px;
	background: #555;
}

.zoom-track {
	position: relative;
	width: 100px;
	height: 1px;
	margin: 0 5px;
	background: #555;
}

.zoom-thumb {
	position: absolute;
	left: 48px;
	top: -5px;
	width: 4px;
	height: 11px;
	background: #444;
}

.zoom-val {
	margin-left: 12px;
}
```
